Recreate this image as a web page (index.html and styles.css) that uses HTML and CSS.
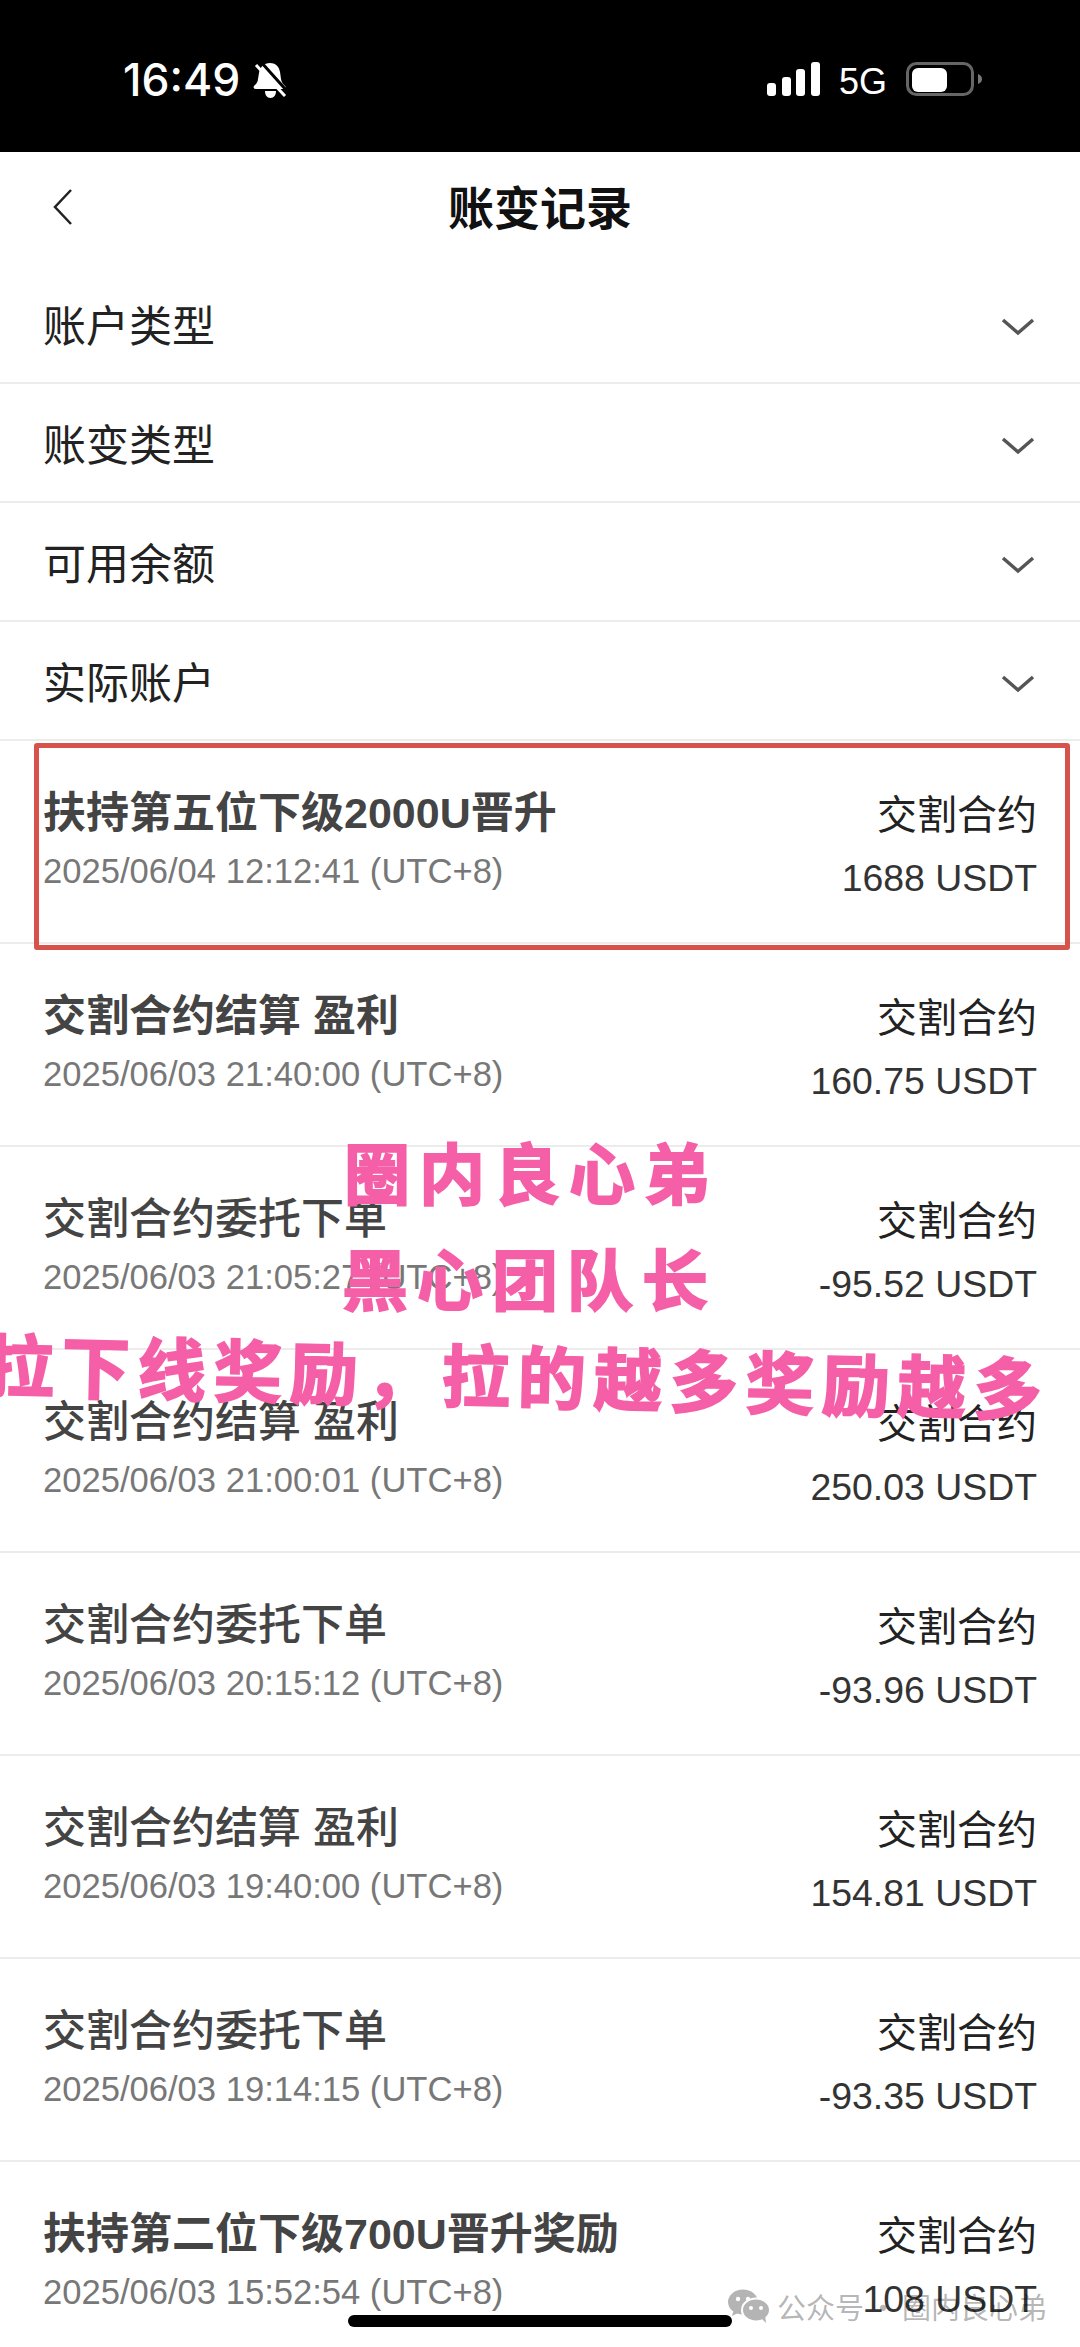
FILE: index.html
```html
<!DOCTYPE html>
<html lang="zh-CN">
<head>
    <meta charset="UTF-8">
    <meta name="viewport" content="width=device-width, initial-scale=1.0">
    <title>账变记录</title>
    <link rel="stylesheet" href="styles.css">
</head>
<body>
    <div class="screen">
        <div class="status-bar">
            <div class="status-left">
                <span class="clock">16:49</span>
                <svg class="bell" width="34" height="37" viewBox="0 0 34 37">
                    <path fill="#fff" d="M17 1c5 0 9 3 10 9l1 7c.4 3 2 5 4 7 1.500 1.500.5 3-1 3H3c-2 0-3-1.500-2-3 2-2 4-4 4-7l1-6C7 5 11 1 17 1zM12 29h11c0 4-2 7-5.500 7S12 33 12 29z"/>
                    <path stroke="#000" stroke-width="3" d="M8 0l26 29"/>
                    <path stroke="#fff" stroke-width="3" d="M3 3l29 31"/>
                </svg>
            </div>
            <div class="status-right">
                <svg width="53" height="34" viewBox="0 0 53 34" fill="#fff">
                    <rect x="0" y="21" width="9" height="13" rx="3"/>
                    <rect x="15" y="15" width="9" height="19" rx="3"/>
                    <rect x="29" y="7" width="9" height="27" rx="3"/>
                    <rect x="44" y="0" width="9" height="34" rx="3"/>
                </svg>
                <span class="network">5G</span>
                <svg width="77" height="34" viewBox="0 0 77 34">
                    <rect x="1.500" y="1.500" width="65" height="31" rx="9" fill="none" stroke="#666" stroke-width="3"/>
                    <rect x="6" y="6" width="35" height="24" rx="6" fill="#fff"/>
                    <path fill="#777" d="M72 12c3 1 4 3 4 5s-1 4-4 5z"/>
                </svg>
            </div>
        </div>

        <div class="nav">
            <svg class="back" width="22" height="36" viewBox="0 0 22 36">
                <path fill="none" stroke="#222" stroke-width="2.500" d="M19 1L3 18l16 17"/>
            </svg>
            <h1>账变记录</h1>
        </div>

        <div class="filters">
            <div class="filter"><span>账户类型</span><svg class="chevron" width="34" height="18" viewBox="0 0 34 18"><path d="M2 2l15 13L32 2"/></svg></div>
            <div class="filter"><span>账变类型</span><svg class="chevron" width="34" height="18" viewBox="0 0 34 18"><path d="M2 2l15 13L32 2"/></svg></div>
            <div class="filter"><span>可用余额</span><svg class="chevron" width="34" height="18" viewBox="0 0 34 18"><path d="M2 2l15 13L32 2"/></svg></div>
            <div class="filter"><span>实际账户</span><svg class="chevron" width="34" height="18" viewBox="0 0 34 18"><path d="M2 2l15 13L32 2"/></svg></div>
        </div>

        <div class="records">
            <div class="record">
                <div>
                    <div class="record-title bold">扶持第五位下级2000U晋升</div>
                    <div class="record-date">2025/06/04 12:12:41 (UTC+8)</div>
                </div>
                <div class="record-side">
                    <div class="record-type">交割合约</div>
                    <div class="record-amount">1688 USDT</div>
                </div>
            </div>
            <div class="record">
                <div>
                    <div class="record-title bold">交割合约结算 盈利</div>
                    <div class="record-date">2025/06/03 21:40:00 (UTC+8)</div>
                </div>
                <div class="record-side">
                    <div class="record-type">交割合约</div>
                    <div class="record-amount">160.75 USDT</div>
                </div>
            </div>
            <div class="record">
                <div>
                    <div class="record-title">交割合约委托下单</div>
                    <div class="record-date">2025/06/03 21:05:27 (UTC+8)</div>
                </div>
                <div class="record-side">
                    <div class="record-type">交割合约</div>
                    <div class="record-amount">-95.52 USDT</div>
                </div>
            </div>
            <div class="record">
                <div>
                    <div class="record-title">交割合约结算 盈利</div>
                    <div class="record-date">2025/06/03 21:00:01 (UTC+8)</div>
                </div>
                <div class="record-side">
                    <div class="record-type">交割合约</div>
                    <div class="record-amount">250.03 USDT</div>
                </div>
            </div>
            <div class="record">
                <div>
                    <div class="record-title">交割合约委托下单</div>
                    <div class="record-date">2025/06/03 20:15:12 (UTC+8)</div>
                </div>
                <div class="record-side">
                    <div class="record-type">交割合约</div>
                    <div class="record-amount">-93.96 USDT</div>
                </div>
            </div>
            <div class="record">
                <div>
                    <div class="record-title">交割合约结算 盈利</div>
                    <div class="record-date">2025/06/03 19:40:00 (UTC+8)</div>
                </div>
                <div class="record-side">
                    <div class="record-type">交割合约</div>
                    <div class="record-amount">154.81 USDT</div>
                </div>
            </div>
            <div class="record">
                <div>
                    <div class="record-title">交割合约委托下单</div>
                    <div class="record-date">2025/06/03 19:14:15 (UTC+8)</div>
                </div>
                <div class="record-side">
                    <div class="record-type">交割合约</div>
                    <div class="record-amount">-93.35 USDT</div>
                </div>
            </div>
            <div class="record">
                <div>
                    <div class="record-title bold">扶持第二位下级700U晋升奖励</div>
                    <div class="record-date">2025/06/03 15:52:54 (UTC+8)</div>
                </div>
                <div class="record-side">
                    <div class="record-type">交割合约</div>
                    <div class="record-amount">108 USDT</div>
                </div>
            </div>
        </div>

        <!-- stuff pasted on top of the screenshot -->
        <div class="highlight"></div>
        <div class="stamp stamp-one">圈内良心弟</div>
        <div class="stamp stamp-two">黑心团队长</div>
        <div class="stamp stamp-three">拉下线奖励&#xFF0C;拉的越多奖励越多</div>

        <div class="watermark">
            <svg width="44" height="34" viewBox="0 0 44 34">
                <ellipse cx="16" cy="13" rx="15" ry="12.500" fill="#b4b4b4"/>
                <path fill="#b4b4b4" d="M7 20l-2 7 8-4z"/>
                <circle cx="11" cy="10" r="2.200" fill="#fff"/>
                <circle cx="21" cy="10" r="2.200" fill="#fff"/>
                <ellipse cx="29" cy="21" rx="14" ry="11.500" fill="#b4b4b4" stroke="#fff" stroke-width="2"/>
                <path fill="#b4b4b4" d="M34 29l5 5-1-8z"/>
                <circle cx="24" cy="19" r="2" fill="#fff"/>
                <circle cx="34" cy="19" r="2" fill="#fff"/>
            </svg>
            <span>公众号 · 圈内良心弟</span>
        </div>

        <div class="home-indicator"></div>
    </div>
</body>
</html>
```

FILE: styles.css
```css
* {
    box-sizing: border-box;
}

body {
    margin: 0;
    background-color: #fff;
    font-family: "Noto Sans CJK SC", "Liberation Sans", sans-serif;
}

.screen {
    position: relative;
    width: 1080px;
    height: 2347px;
    overflow: hidden;
    background: #fff;
}

/* status bar */
.status-bar {
    display: flex;
    justify-content: space-between;
    height: 152px;
    padding: 62px 97px 0 123px;
    background: #000;
    color: #fff;
}

.status-left {
    display: flex;
    align-items: flex-start;
    gap: 13px;
}

.clock {
    font-family: Inter, sans-serif;
    font-size: 44.500px;
    font-weight: 500;
    line-height: 36px;
}

.status-right {
    display: flex;
    align-items: flex-start;
    gap: 19px;
}

.network {
    font-family: "Liberation Sans", sans-serif;
    font-size: 36px;
    line-height: 36px;
    margin-top: 2px;
}

/* header */
.nav {
    position: relative;
    display: flex;
    align-items: center;
    justify-content: center;
    height: 113px;
    padding-bottom: 8px;
}

.nav h1 {
    margin: 0;
    color: #111;
    font-size: 46px;
    font-weight: 700;
    line-height: 60px;
}

.back {
    position: absolute;
    left: 52px;
    top: 37px;
}

/* filters */
.filter {
    display: flex;
    align-items: center;
    justify-content: space-between;
    height: 119px;
    padding: 0 45px 0 43px;
    border-bottom: 2px solid #ececec;
    color: #222;
    font-size: 43px;
}

.filter span {
    margin-top: -2px;
    line-height: 60px;
}

.chevron {
    margin-top: 6px;
}

.chevron path {
    fill: none;
    stroke: #555;
    stroke-width: 3.500;
}

/* records */
.record {
    display: flex;
    justify-content: space-between;
    height: 203px;
    padding: 44px 43px 0 43px;
    border-bottom: 2px solid #ececec;
}

.record-title {
    color: #444;
    font-family: "Liberation Sans", "Noto Sans CJK SC", sans-serif;
    font-size: 43px;
    font-weight: 500;
    line-height: 56px;
}

.record-title.bold {
    font-weight: 700;
}

.record-date {
    margin-top: 8px;
    color: #777;
    font-family: "Liberation Sans", sans-serif;
    font-size: 34.600px;
    line-height: 44px;
    white-space: nowrap;
}

.record-side {
    margin-top: -1px;
    text-align: right;
}

.record-type {
    color: #222;
    font-size: 40px;
    line-height: 56px;
}

.record-amount {
    margin-top: 16px;
    color: #333;
    font-family: "Liberation Sans", sans-serif;
    font-size: 37.400px;
    line-height: 44px;
    white-space: nowrap;
}

/* overlays */
.highlight {
    position: absolute;
    left: 34px;
    top: 743px;
    width: 1036px;
    height: 207px;
    border: 5px solid #d8524c;
    border-radius: 3px;
}

.stamp {
    position: absolute;
    color: #f55fa7;
    font-size: 66px;
    font-weight: 700;
    line-height: 80px;
    white-space: nowrap;
    -webkit-text-stroke: 2px #f55fa7;
}

.stamp-one {
    left: 344px;
    top: 1130px;
    letter-spacing: 9px;
}

.stamp-two {
    left: 342px;
    top: 1236px;
    letter-spacing: 9px;
}

.stamp-three {
    left: -14px;
    top: 1322px;
    font-size: 68px;
    letter-spacing: 8px;
    transform: rotate(1.300deg);
    transform-origin: left center;
}

.watermark {
    position: absolute;
    left: 727px;
    top: 2286px;
    display: flex;
    align-items: center;
    gap: 6px;
    color: rgba(0, 0, 0, 0.3);
    font-size: 29px;
    line-height: 40px;
    word-spacing: -2px;
    white-space: nowrap;
}

.home-indicator {
    position: absolute;
    left: 348px;
    top: 2315px;
    width: 384px;
    height: 12px;
    border-radius: 6px;
    background: #000;
}
```
